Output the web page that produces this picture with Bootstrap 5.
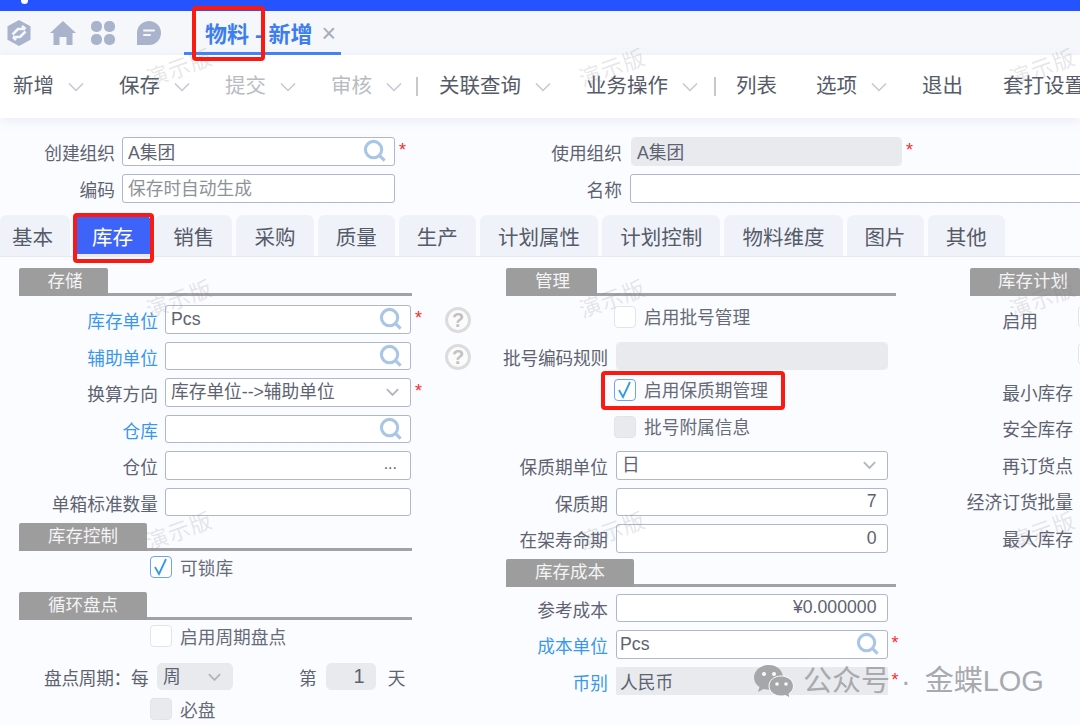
<!DOCTYPE html>
<html lang="zh-CN">
<head>
<meta charset="utf-8">
<title>物料 - 新增</title>
<link rel="stylesheet" href="https://cdn.jsdelivr.net/npm/bootstrap@5.3.0/dist/css/bootstrap.min.css">
<style>
html,body{height:100%;overflow:hidden}
body{background:#fbfcff;font-family:"Liberation Sans","Noto Sans CJK SC",sans-serif;color:#5d6371;font-size:17.7px}
.page{position:relative;width:1080px;height:725px;overflow:hidden}
.topbar{height:11px;background:#2453ff;position:relative}
.topdot{position:absolute;left:21px;top:-3px;width:7px;height:7px;border-radius:50%;background:#fff}
.tabstrip{height:44px;background:#f5f7fb}
.appicons{padding-left:7px}
.appicon{fill:#a9b4cc;display:block;flex:none}
.ic-home{margin-left:19px}
.ic-clover{margin-left:14px}
.ic-chat{margin-left:20px}
.doctab{height:43px;margin-left:22px;width:157px;padding-left:21px;border-bottom:3px solid #3f7ff5;color:#3c7df0;font-weight:700;font-size:22px;line-height:46px;white-space:nowrap}
.docclose{font-weight:400;color:#a8acb8;font-size:25px;margin-left:9px;line-height:20px}
.toolbar{height:63px;background:#fff;box-shadow:0 3px 10px rgba(190,200,225,.28);font-size:20.5px;color:#555b68;position:relative;padding-left:13px;white-space:nowrap}
.tool{display:flex;align-items:center;width:106px;flex:none}
.tool svg{margin-left:14px;flex:none}
.tool-off{color:#b8bbc2}
.tool-plain{width:auto;margin-right:39px}
.tool-exit{margin-right:40px}
.tool-last{width:71px}
.tool-wide{width:147px}
.tool-biz{width:112px}
.toolsep{width:2px;height:19px;background:#c6c8cc;margin:0 21px 0 14px;flex:none}
.toolsep-b{margin:0 20px 0 16px}
.headform{padding-top:19px;height:97px}
.hrow{height:37px}
.hlabel{text-align:right;line-height:28px;padding-top:3px;white-space:nowrap;flex:none}
.fld.form-control,.fld.form-select{height:28.5px;min-height:0;padding:0 5px;border:1.5px solid #aeb6d0;border-radius:3px;font-size:17.7px;color:#5d6371;background-color:#fff;line-height:25px;box-shadow:none}
.fld.form-control::placeholder{color:#8d9199}
.fld.form-select{padding-top:1px;background-image:url("data:image/svg+xml,%3Csvg xmlns='http://www.w3.org/2000/svg' viewBox='0 0 16 10'%3E%3Cpath d='M2 2l6 6 6-6' fill='none' stroke='%23b2b5bd' stroke-width='2'/%3E%3C/svg%3E");background-size:15px 10px;background-position:right 10px center}
.fld.locked{background-color:#e8eaee;border-color:#e8eaee;border-radius:4px}
.fld.numeric{text-align:right;padding-right:10px}
.fld.tight{padding-left:3px}
.fld.square{border-radius:1px}
.fld.lowtext{padding-top:3px}
.fldwrap{position:relative;flex:none}
.srch{position:absolute;right:8px;top:2px;pointer-events:none}
.dots{position:absolute;right:14px;top:1px;font-size:16px;color:#666;line-height:24px}
.reqmark{color:#ff2a2a;font-size:18px;line-height:27px;padding-left:4px;flex:none}
.helpmark{width:26px;height:26px;border:3px solid #dcdcdc;border-radius:50%;color:#c2c2c2;font-weight:700;font-size:20px;line-height:20px;text-align:center;flex:none;margin-top:2px;background:#fbfbfb}
.h-l1{width:115px;margin-right:7px}
.h-w1{width:273px}
.h-gap{width:111px;flex:none}
.h-l2{width:116px;margin-right:9px}
.h-l3{width:116px;margin-right:8px}
.h-w2{width:271px}
.h-w3{width:480px}
.tabsbar{height:42px;border-bottom:1px solid #e6e9f1;gap:4px}
.tabsbar .nav-link{height:41px;padding:0 18.1px;background:#eff2f9;color:#555b68;font-size:20.5px;line-height:45px;border-radius:7px 7px 0 0;white-space:nowrap}
.tabsbar .nav-link.active{background:#3e63f8;color:#fff;border-bottom:2px solid #f3e6e6}
.tabsbar .nav-link.firsttab{padding:0 17px 0 12px}
.columns{padding-top:11px}
.colA{width:500px;flex:none}
.colB{width:466px;flex:none}
.colC{flex:1 1 auto;min-width:0}
.sechead{height:28px;border-bottom:3px solid #a2a2a2;box-sizing:border-box}
.sectitle{height:28px;background:#9d9d9d;color:#f4f4f4;font-size:17.5px;line-height:26px;text-align:center;border-radius:2px 2px 0 0;flex:none;white-space:nowrap}
.secA{margin-left:19px;width:393px}
.secB{margin-left:6px;width:390px}
.secC{margin-left:4px;border:0}
.st-store{width:89px;padding-left:3px}
.st-manage{width:91px;padding-left:2px}
.st-wide{width:128px}
.st-plan{width:110px;padding-left:28px;text-align:left}
.sec-up1{margin-top:-1px}
.sec-up2{margin-top:-2px}
.sp{margin-top:9px}
.sp7{height:7px}
.frow{height:36.5px}
.lblA{width:158px;margin-right:7px}
.lblB{width:108px;margin-right:8px}
.lblB.squeeze{letter-spacing:-.2px}
.lblC{width:107px;margin-top:-1.500px}
.lblC.enable{width:72px;margin-top:0;margin-right:40px}
.linked{color:#3a97ee}
.wA{width:246px}
.wB{width:271.5px}
.gapA{width:34px;flex:none}
.tick.form-check-input{width:22px;height:22px;margin:1px 8px 0 0;border:1.5px solid #e2e4ea;border-radius:4px;background-color:#fff;flex:none;float:none;box-shadow:none}
.tick.form-check-input:checked{background-color:#fff;border-color:#6fa2f5;background-image:url("data:image/svg+xml,%3Csvg xmlns='http://www.w3.org/2000/svg' viewBox='0 0 22 22'%3E%3Cpath d='M5 11l4 7 7-15' fill='none' stroke='%232f9be8' stroke-width='1.8'/%3E%3C/svg%3E");background-size:22px 22px}
.tick.form-check-input:disabled{background-color:#e8eaee;opacity:1}
.tick.edge{margin-left:112px}
.ticklabel{line-height:24px;white-space:nowrap;color:#666b78;padding-top:2px}
.colB .ticklabel{padding-top:1px}
.offA{margin-left:150px}
.offB{margin-left:114px}
.tr-lock{margin-top:4px;height:37px}
.tr-cycle{margin-top:4px;height:26px}
.tr-must{margin-top:7px}
.cycle{margin-top:13px;height:27px;line-height:33px;white-space:nowrap}
.cyclelabel{margin-left:44px;width:113px;flex:none;letter-spacing:-.3px}
.cyclesel.form-select{width:76px;height:27px;flex:none;border-radius:5px;line-height:25px}
.cycleno{margin-left:66px}
.cyclenum.form-control{width:50px;height:27px;flex:none;margin:0 12px 0 9px;border-radius:5px;font-size:20px}
.redbox{position:absolute;border:4px solid #fb1a12;border-radius:4px;pointer-events:none}
.rb-a{left:192px;top:6px;width:73px;height:55px}
.rb-b{left:73px;top:213px;width:81px;height:50px}
.rb-c{left:601px;top:371px;width:184px;height:39px}
.wm{position:absolute;color:rgba(130,130,140,.2);font-size:22px;transform:rotate(-20deg);pointer-events:none;white-space:nowrap;letter-spacing:1px}
.x1{left:145px}.x2{left:578px}.x3{left:1008px}
.y1{top:52px}.y2{top:283px}.y3{top:515px}
.stamp{position:absolute;left:753px;top:663px;color:#a8aaae;font-size:29px;line-height:36px;white-space:nowrap;pointer-events:none}
.stamp svg{margin-right:9px;flex:none}
.stampdot{margin:0 14px 0 11px}
</style>
</head>
<body>
<div class="page">
  <div class="topbar"><span class="topdot"></span></div>
  <div class="tabstrip d-flex align-items-center">
    <div class="appicons d-flex align-items-center">
      <svg class="appicon" width="24" height="26" viewBox="0 0 24 26"><path d="M12 0l11.500 6.300v13.400L12 26 .5 19.700V6.300z"/><path d="M5.500 14.500L11 9h7M15 6l3.500 3M18.500 11.500L13 17H6M9 20l-3-3" fill="none" stroke="#f5f7fb" stroke-width="2.600"/></svg>
      <svg class="appicon ic-home" width="26" height="24" viewBox="0 0 26 24"><path d="M13 0l13 12h-3.500v12h-6v-8h-7v8h-6V12H0z"/></svg>
      <svg class="appicon ic-clover" width="26" height="24" viewBox="0 0 26 24"><rect x="1" y="0" width="11" height="11" rx="5"/><rect x="14" y="0" width="11" height="11" rx="5"/><rect x="1" y="13" width="11" height="11" rx="5"/><rect x="14" y="13" width="11" height="11" rx="5"/></svg>
      <svg class="appicon ic-chat" width="26" height="24" viewBox="0 0 26 24"><path d="M13 0a12 12 0 0 1 0 24H1v-12A12 12 0 0 1 13 0z"/><path d="M8 9.500h10M8 14h6" stroke="#f5f7fb" stroke-width="2" stroke-linecap="round"/></svg>
    </div>
    <div class="doctab">物料 - 新增<span class="docclose">×</span></div>
  </div>

  <div class="toolbar d-flex align-items-center">
    <div class="tool">新增<svg width="16" height="10" viewBox="0 0 16 10"><path d="M1 1.500l7 7 7-7" fill="none" stroke="#c4c7d0" stroke-width="1.500"/></svg></div>
    <div class="tool">保存<svg width="16" height="10" viewBox="0 0 16 10"><path d="M1 1.500l7 7 7-7" fill="none" stroke="#c4c7d0" stroke-width="1.500"/></svg></div>
    <div class="tool tool-off">提交<svg width="16" height="10" viewBox="0 0 16 10"><path d="M1 1.500l7 7 7-7" fill="none" stroke="#c4c7d0" stroke-width="1.500"/></svg></div>
    <div class="tool tool-off tool-last">审核<svg width="16" height="10" viewBox="0 0 16 10"><path d="M1 1.500l7 7 7-7" fill="none" stroke="#c4c7d0" stroke-width="1.500"/></svg></div>
    <span class="toolsep"></span>
    <div class="tool tool-wide">关联查询<svg width="16" height="10" viewBox="0 0 16 10"><path d="M1 1.500l7 7 7-7" fill="none" stroke="#c4c7d0" stroke-width="1.500"/></svg></div>
    <div class="tool tool-biz">业务操作<svg width="16" height="10" viewBox="0 0 16 10"><path d="M1 1.500l7 7 7-7" fill="none" stroke="#c4c7d0" stroke-width="1.500"/></svg></div>
    <span class="toolsep toolsep-b"></span>
    <div class="tool tool-plain">列表</div>
    <div class="tool">选项<svg width="16" height="10" viewBox="0 0 16 10"><path d="M1 1.500l7 7 7-7" fill="none" stroke="#c4c7d0" stroke-width="1.500"/></svg></div>
    <div class="tool tool-plain tool-exit">退出</div>
    <div class="tool tool-plain">套打设置</div>
  </div>

  <form class="headform">
    <div class="hrow d-flex align-items-start">
      <div class="hlabel h-l1">创建组织</div>
      <div class="fldwrap h-w1"><input class="fld form-control" value="A集团"><svg class="srch" width="24" height="24" viewBox="0 0 25 25"><circle cx="11" cy="11" r="8.500" fill="none" stroke="#a9c6e6" stroke-width="3.200"/><path d="M17 17l5.500 5.500" stroke="#a9c6e6" stroke-width="3.200"/></svg></div>
      <div class="reqmark h-gap">*</div>
      <div class="hlabel h-l2">使用组织</div>
      <div class="fldwrap h-w2"><input class="fld form-control locked" value="A集团" disabled></div>
      <div class="reqmark">*</div>
    </div>
    <div class="hrow d-flex align-items-start">
      <div class="hlabel h-l1">编码</div>
      <div class="fldwrap h-w1"><input class="fld form-control lowtext" placeholder="保存时自动生成"></div>
      <div class="h-gap"></div>
      <div class="hlabel h-l3">名称</div>
      <div class="fldwrap h-w3"><input class="fld form-control"></div>
    </div>
  </form>

  <ul class="nav tabsbar flex-nowrap">
    <li class="nav-item"><a class="nav-link firsttab" href="#">基本</a></li>
    <li class="nav-item"><a class="nav-link active" href="#">库存</a></li>
    <li class="nav-item"><a class="nav-link" href="#">销售</a></li>
    <li class="nav-item"><a class="nav-link" href="#">采购</a></li>
    <li class="nav-item"><a class="nav-link" href="#">质量</a></li>
    <li class="nav-item"><a class="nav-link" href="#">生产</a></li>
    <li class="nav-item"><a class="nav-link" href="#">计划属性</a></li>
    <li class="nav-item"><a class="nav-link" href="#">计划控制</a></li>
    <li class="nav-item"><a class="nav-link" href="#">物料维度</a></li>
    <li class="nav-item"><a class="nav-link" href="#">图片</a></li>
    <li class="nav-item"><a class="nav-link" href="#">其他</a></li>
  </ul>

  <div class="columns d-flex">
    <div class="colA">
      <div class="sechead secA d-flex"><div class="sectitle st-store">存储</div></div>
      <div class="sp"></div>
      <div class="frow d-flex align-items-start">
        <div class="hlabel lblA linked">库存单位</div>
        <div class="fldwrap wA"><input class="fld form-control" value="Pcs"><svg class="srch" width="24" height="24" viewBox="0 0 25 25"><circle cx="11" cy="11" r="8.500" fill="none" stroke="#a9c6e6" stroke-width="3.200"/><path d="M17 17l5.500 5.500" stroke="#a9c6e6" stroke-width="3.200"/></svg></div>
        <div class="reqmark gapA">*</div><div class="helpmark">?</div>
      </div>
      <div class="frow d-flex align-items-start">
        <div class="hlabel lblA linked">辅助单位</div>
        <div class="fldwrap wA"><input class="fld form-control"><svg class="srch" width="24" height="24" viewBox="0 0 25 25"><circle cx="11" cy="11" r="8.500" fill="none" stroke="#a9c6e6" stroke-width="3.200"/><path d="M17 17l5.500 5.500" stroke="#a9c6e6" stroke-width="3.200"/></svg></div>
        <div class="gapA"></div><div class="helpmark">?</div>
      </div>
      <div class="frow d-flex align-items-start">
        <div class="hlabel lblA">换算方向</div>
        <div class="fldwrap wA"><select class="fld form-select"><option>库存单位--&gt;辅助单位</option></select></div>
        <div class="reqmark gapA">*</div>
      </div>
      <div class="frow d-flex align-items-start">
        <div class="hlabel lblA linked">仓库</div>
        <div class="fldwrap wA"><input class="fld form-control"><svg class="srch" width="24" height="24" viewBox="0 0 25 25"><circle cx="11" cy="11" r="8.500" fill="none" stroke="#a9c6e6" stroke-width="3.200"/><path d="M17 17l5.500 5.500" stroke="#a9c6e6" stroke-width="3.200"/></svg></div>
      </div>
      <div class="frow d-flex align-items-start">
        <div class="hlabel lblA">仓位</div>
        <div class="fldwrap wA"><input class="fld form-control"><span class="dots">...</span></div>
      </div>
      <div class="frow d-flex align-items-start">
        <div class="hlabel lblA">单箱标准数量</div>
        <div class="fldwrap wA"><input class="fld form-control"></div>
      </div>
      <div class="sechead secA d-flex sec-up1"><div class="sectitle st-wide">库存控制</div></div>
      <div class="d-flex align-items-start offA tr-lock">
        <input class="tick form-check-input" type="checkbox" checked><span class="ticklabel">可锁库</span>
      </div>
      <div class="sechead secA d-flex"><div class="sectitle st-wide">循环盘点</div></div>
      <div class="d-flex align-items-start offA tr-cycle">
        <input class="tick form-check-input" type="checkbox"><span class="ticklabel">启用周期盘点</span>
      </div>
      <div class="cycle d-flex align-items-start">
        <div class="cyclelabel">盘点周期：每</div>
        <select class="fld form-select locked cyclesel"><option>周</option></select>
        <div class="cycleno">第</div>
        <input class="fld form-control locked numeric cyclenum" value="1">
        <div>天</div>
      </div>
      <div class="d-flex align-items-start offA tr-must">
        <input class="tick form-check-input" type="checkbox" disabled><span class="ticklabel">必盘</span>
      </div>
    </div>

    <div class="colB">
      <div class="sechead secB d-flex"><div class="sectitle st-manage">管理</div></div>
      <div class="sp"></div>
      <div class="frow d-flex align-items-start offB">
        <input class="tick form-check-input" type="checkbox"><span class="ticklabel">启用批号管理</span>
      </div>
      <div class="frow d-flex align-items-start">
        <div class="hlabel lblB squeeze">批号编码规则</div>
        <div class="fldwrap wB"><input class="fld form-control locked" disabled></div>
      </div>
      <div class="frow d-flex align-items-start offB">
        <input class="tick form-check-input" type="checkbox" checked><span class="ticklabel">启用保质期管理</span>
      </div>
      <div class="frow d-flex align-items-start offB">
        <input class="tick form-check-input" type="checkbox" disabled><span class="ticklabel">批号附属信息</span>
      </div>
      <div class="frow d-flex align-items-start">
        <div class="hlabel lblB">保质期单位</div>
        <div class="fldwrap wB"><select class="fld form-select"><option>日</option></select></div>
      </div>
      <div class="frow d-flex align-items-start">
        <div class="hlabel lblB">保质期</div>
        <div class="fldwrap wB"><input class="fld form-control numeric" value="7"></div>
      </div>
      <div class="frow d-flex align-items-start">
        <div class="hlabel lblB">在架寿命期</div>
        <div class="fldwrap wB"><input class="fld form-control numeric" value="0"></div>
      </div>
      <div class="sechead secB d-flex sec-up2"><div class="sectitle st-wide">库存成本</div></div>
      <div class="sp7"></div>
      <div class="frow d-flex align-items-start">
        <div class="hlabel lblB">参考成本</div>
        <div class="fldwrap wB"><input class="fld form-control numeric" value="¥0.000000"></div>
      </div>
      <div class="frow d-flex align-items-start">
        <div class="hlabel lblB linked">成本单位</div>
        <div class="fldwrap wB"><input class="fld form-control tight" value="Pcs"><svg class="srch" width="24" height="24" viewBox="0 0 25 25"><circle cx="11" cy="11" r="8.500" fill="none" stroke="#a9c6e6" stroke-width="3.200"/><path d="M17 17l5.500 5.500" stroke="#a9c6e6" stroke-width="3.200"/></svg></div>
        <div class="reqmark">*</div>
      </div>
      <div class="frow d-flex align-items-start">
        <div class="hlabel lblB linked">币别</div>
        <div class="fldwrap wB"><input class="fld form-control locked tight square" value="人民币" disabled></div>
        <div class="reqmark">*</div>
      </div>
    </div>

    <div class="colC">
      <div class="sechead secC d-flex"><div class="sectitle st-plan">库存计划</div></div>
      <div class="sp"></div>
      <div class="frow d-flex align-items-start"><div class="hlabel lblC enable">启用</div><input class="tick form-check-input" type="checkbox"></div>
      <div class="frow d-flex align-items-start"><input class="tick form-check-input edge" type="checkbox"></div>
      <div class="frow d-flex align-items-start"><div class="hlabel lblC">最小库存</div></div>
      <div class="frow d-flex align-items-start"><div class="hlabel lblC">安全库存</div></div>
      <div class="frow d-flex align-items-start"><div class="hlabel lblC">再订货点</div></div>
      <div class="frow d-flex align-items-start"><div class="hlabel lblC">经济订货批量</div></div>
      <div class="frow d-flex align-items-start"><div class="hlabel lblC">最大库存</div></div>
    </div>
  </div>

  <span class="wm x1 y1">演示版</span>
  <span class="wm x2 y1">演示版</span>
  <span class="wm x3 y1">演示版</span>
  <span class="wm x1 y2">演示版</span>
  <span class="wm x2 y2">演示版</span>
  <span class="wm x3 y2">演示版</span>
  <span class="wm x1 y3">演示版</span>
  <span class="wm x2 y3">演示版</span>
  <span class="wm x3 y3">演示版</span>

  <div class="redbox rb-a"></div>
  <div class="redbox rb-b"></div>
  <div class="redbox rb-c"></div>

  <div class="stamp d-flex align-items-center">
    <svg width="41" height="34" viewBox="0 0 41 34"><path d="M16 1C7.500 1 1 6.700 1 13.500c0 4 2.200 7.300 5.500 9.600L5 28l5.500-3c1.700.5 3.500.7 5.500.7 8.500 0 14-5.800 14-12.200S24.500 1 16 1z" fill="#a6a7a8"/><path d="M28 12c-7 0-12 4.500-12 10s5 10 12 10c1.500 0 3-.2 4.300-.6L37 34l-1-4.300c3-2 4.500-4.700 4.500-7.700C40.500 16.500 35 12 28 12z" fill="#a6a7a8" stroke="#fbfcff" stroke-width="1"/><circle cx="11" cy="10" r="2" fill="#fbfcff"/><circle cx="21" cy="10" r="2" fill="#fbfcff"/><circle cx="24" cy="20" r="1.800" fill="#fbfcff"/><circle cx="33" cy="20" r="1.800" fill="#fbfcff"/></svg>
    <span>公众号</span><span class="stampdot">·</span><span>金蝶LOG</span>
  </div>
</div>
<script src="https://cdn.jsdelivr.net/npm/bootstrap@5.3.0/dist/js/bootstrap.bundle.min.js"></script>
</body>
</html>
